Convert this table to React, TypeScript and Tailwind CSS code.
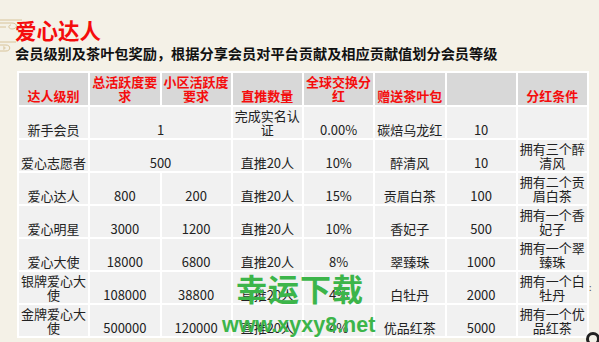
import React from "react";

type Cell = { text: string; span?: number };

const HEAD = ["达人级别", "总活跃度要求", "小区活跃度要求", "直推数量", "全球交换分红", "赠送茶叶包", "", "分红条件"];

const ROWS: Cell[][] = [
  [{ text: "新手会员" }, { text: "1", span: 2 }, { text: "完成实名认证" }, { text: "0.00%" }, { text: "碳焙乌龙红" }, { text: "10" }, { text: "" }],
  [{ text: "爱心志愿者" }, { text: "500", span: 2 }, { text: "直推20人" }, { text: "10%" }, { text: "醉清风" }, { text: "10" }, { text: "拥有三个醉清风" }],
  [{ text: "爱心达人" }, { text: "800" }, { text: "200" }, { text: "直推20人" }, { text: "15%" }, { text: "贡眉白茶" }, { text: "100" }, { text: "拥有二个贡眉白茶" }],
  [{ text: "爱心明星" }, { text: "3000" }, { text: "1200" }, { text: "直推20人" }, { text: "10%" }, { text: "香妃子" }, { text: "500" }, { text: "拥有一个香妃子" }],
  [{ text: "爱心大使" }, { text: "18000" }, { text: "6800" }, { text: "直推20人" }, { text: "8%" }, { text: "翠臻珠" }, { text: "1000" }, { text: "拥有一个翠臻珠" }],
  [{ text: "银牌爱心大使" }, { text: "108000" }, { text: "38800" }, { text: "直推20人" }, { text: "4%" }, { text: "白牡丹" }, { text: "2000" }, { text: "拥有一个白牡丹" }],
  [{ text: "金牌爱心大使" }, { text: "500000" }, { text: "120000" }, { text: "直推20人" }, { text: "4%" }, { text: "优品红茶" }, { text: "5000" }, { text: "拥有一个优品红茶" }],
];

function Swirl() {
  return (
    <svg width="24" height="40" viewBox="0 0 24 40" className="absolute left-0 top-[14px]" fill="none" stroke="#d8c49a" strokeWidth="1">
      <path d="M0 6 H22" />
      <path d="M0 9 H12 C18 9 18 15 12 15 C8 15 8 11 11 11" />
      <path d="M0 13 H6" />
      <path d="M0 28 H16" />
      <path d="M0 31 H6 C11 31 11 37 6 37 H0" />
      <path d="M3 33 C6 33 6 35 3 35" />
    </svg>
  );
}

export default function App() {
  return (
    <div
      className="relative h-[342px] w-[599px] overflow-hidden bg-[#f4f1e7] pl-[15px] pt-[17px]"
      style={{ fontFamily: '"Noto Sans CJK SC", "Noto Sans", sans-serif' }}
    >
      <Swirl />
      <h1 className="text-[21.5px] font-bold leading-[26px] text-[#f50d0d]">爱心达人</h1>
      <p className="mt-[1px] text-[14.2px] font-bold leading-[18px] text-[#111]">
        会员级别及茶叶包奖励，根据分享会员对平台贡献及相应贡献值划分会员等级
      </p>
      <table className="ml-[2px] mt-[9px] w-[572px] table-fixed border-collapse text-center text-[13px] leading-[14px]">
        <thead>
          <tr className="h-[34px] bg-[#d8d8d8]">
            {HEAD.map((h, i) => (
              <th key={i} className="border-2 border-white px-[2px] pb-[2px] align-bottom font-bold text-[#f50d0d]">
                {h}
              </th>
            ))}
          </tr>
        </thead>
        <tbody>
          {ROWS.map((row, r) => (
            <tr key={r} className="h-[33px] bg-[#f1f1f1]">
              {row.map((c, i) => (
                <td
                  key={i}
                  colSpan={c.span}
                  className="border-2 border-white px-[2px] pb-[1px] align-bottom text-[#222]"
                >
                  {c.text}
                </td>
              ))}
            </tr>
          ))}
        </tbody>
      </table>

      {/* watermark over the table */}
      <div className="absolute left-[236px] top-[271px] text-[31px] font-bold leading-[34px] tracking-[1px] text-[#3cb54a]">
        幸运下载
      </div>
      <div
        className="absolute left-[222px] top-[312px] text-[21.5px] font-bold leading-[26px] text-[#3cb54a]"
        style={{ fontFamily: '"Liberation Sans", Arial, sans-serif' }}
      >
        www.xyxy8.net
      </div>
      <div className="absolute left-[589px] top-[283px] text-[9px] leading-[10px] text-[#555]">:</div>
      <div className="absolute left-[586px] top-[332px] h-[14px] w-[14px] rounded-full border-[3px] border-[#222]" />
    </div>
  );
}
